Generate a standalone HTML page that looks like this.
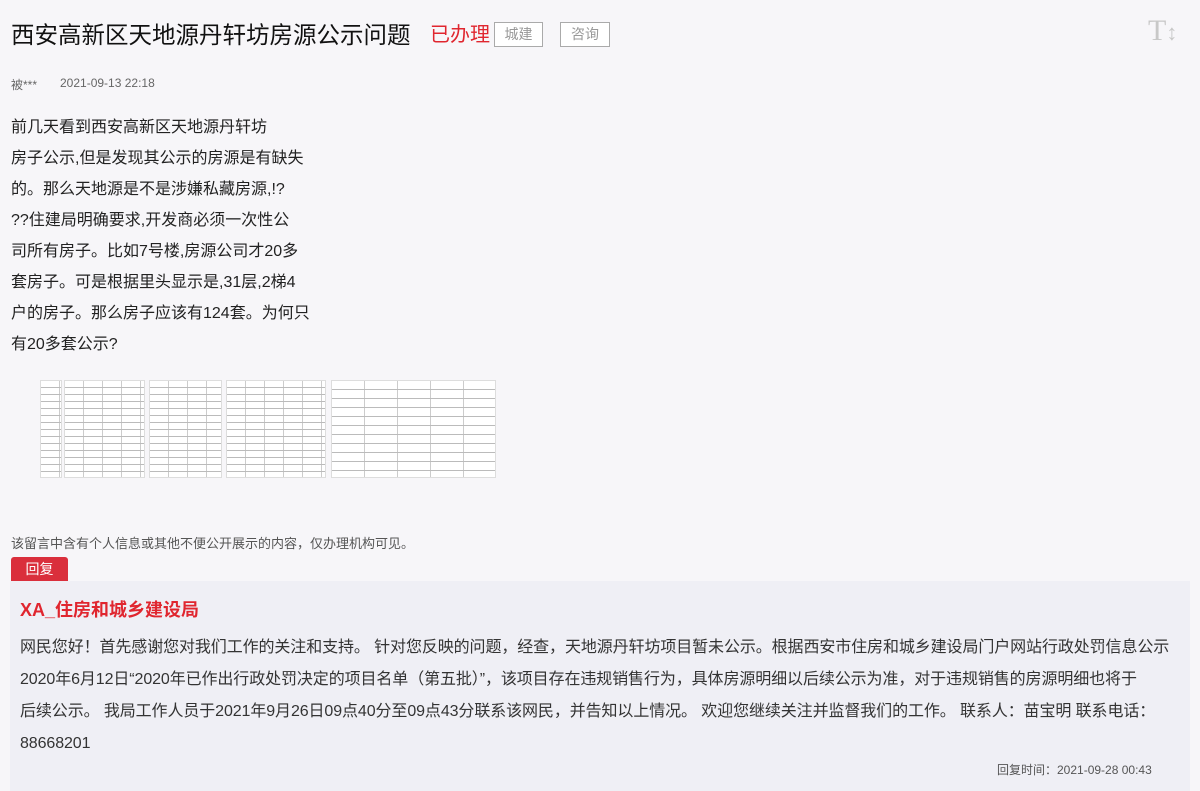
<!DOCTYPE html>
<html><head><meta charset="utf-8"><style>
*{margin:0;padding:0;box-sizing:border-box}
body{width:1200px;height:784px;background:#f7f6f9;font-family:"Liberation Sans","Noto Sans CJK SC",sans-serif;color:#333;position:relative;overflow:hidden}
.abs{position:absolute;white-space:nowrap}
.title{left:11px;top:19px;font-size:23.5px;color:#111;line-height:32px}
.st{left:430px;top:21px;font-size:20px;color:#e0262f;line-height:28px}
.tag{top:22px;height:25px;border:1px solid #aaa;background:#fff;color:#999;font-size:14px;line-height:23px;text-align:center}
.meta{top:76px;font-size:12px;color:#666}
.q{left:11px;top:112px;font-size:16px;line-height:31px;color:#222}
.img{position:absolute;top:380px;height:98px;background-color:#fff;border:1px solid #ddd;
background-image:repeating-linear-gradient(to bottom,transparent 0,transparent 6px,#bbb 6px,#bbb 7px),repeating-linear-gradient(to right,transparent 0,transparent 18px,#ccc 18px,#ccc 19px)}
.note{left:11px;top:533px;font-size:13px;color:#555}
.rbtn{left:11px;top:557px;width:57px;height:24px;background:#da2f3c;color:#fff;font-size:14px;line-height:24px;text-align:center;border-radius:3px 3px 0 0}
.rbox{position:absolute;left:10px;top:581px;width:1180px;height:210px;background:#efeff5}
.org{left:20px;top:596px;font-size:18px;color:#e0262f;font-weight:bold}
.ans{position:absolute;left:20px;top:632px;width:1170px;font-size:16px;line-height:32px;color:#333;white-space:nowrap;letter-spacing:-0.1px}
.time{left:997px;top:761px;font-size:12px;color:#555}
</style></head><body>
<div class="abs title">西安高新区天地源丹轩坊房源公示问题</div>
<div class="abs st">已办理</div>
<div class="abs tag" style="left:494px;width:49px">城建</div>
<div class="abs tag" style="left:560px;width:50px">咨询</div>
<div class="abs" style="left:1148px;top:14px;font-family:'Liberation Serif',serif;font-size:30px;color:#c8c8c8;line-height:34px">T<span style="font-size:22px;font-family:'Liberation Sans'">↕</span></div>
<div class="abs meta" style="left:11px">被***</div>
<div class="abs meta" style="left:60px">2021-09-13 22:18</div>
<div class="abs q">前几天看到西安高新区天地源丹轩坊<br>房子公示,但是发现其公示的房源是有缺失<br>的。那么天地源是不是涉嫌私藏房源,!?<br>??住建局明确要求,开发商必须一次性公<br>司所有房子。比如7号楼,房源公司才20多<br>套房子。可是根据里头显示是,31层,2梯4<br>户的房子。那么房子应该有124套。为何只<br>有20多套公示?</div>
<div class="img" style="left:40px;width:22px;top:380px"></div>
<div class="img" style="left:64px;width:81px"></div>
<div class="img" style="left:149px;width:73px"></div>
<div class="img" style="left:226px;width:100px"></div>
<div class="img" style="left:331px;width:165px;background-image:repeating-linear-gradient(to bottom,transparent 0,transparent 8px,#bbb 8px,#bbb 9px),repeating-linear-gradient(to right,transparent 0,transparent 32px,#ccc 32px,#ccc 33px)"></div>
<div class="abs note">该留言中含有个人信息或其他不便公开展示的内容，仅办理机构可见。</div>
<div class="abs rbtn">回复</div>
<div class="rbox"></div>
<div class="abs org">XA_住房和城乡建设局</div>
<div class="ans">网民您好！首先感谢您对我们工作的关注和支持。 针对您反映的问题，经查，天地源丹轩坊项目暂未公示。根据西安市住房和城乡建设局门户网站行政处罚信息公示<br>2020年6月12日“2020年已作出行政处罚决定的项目名单（第五批）”，该项目存在违规销售行为，具体房源明细以后续公示为准，对于违规销售的房源明细也将于<br>后续公示。 我局工作人员于2021年9月26日09点40分至09点43分联系该网民，并告知以上情况。 欢迎您继续关注并监督我们的工作。 联系人：苗宝明 联系电话：<br>88668201</div>
<div class="abs time">回复时间：2021-09-28 00:43</div>
</body></html>
